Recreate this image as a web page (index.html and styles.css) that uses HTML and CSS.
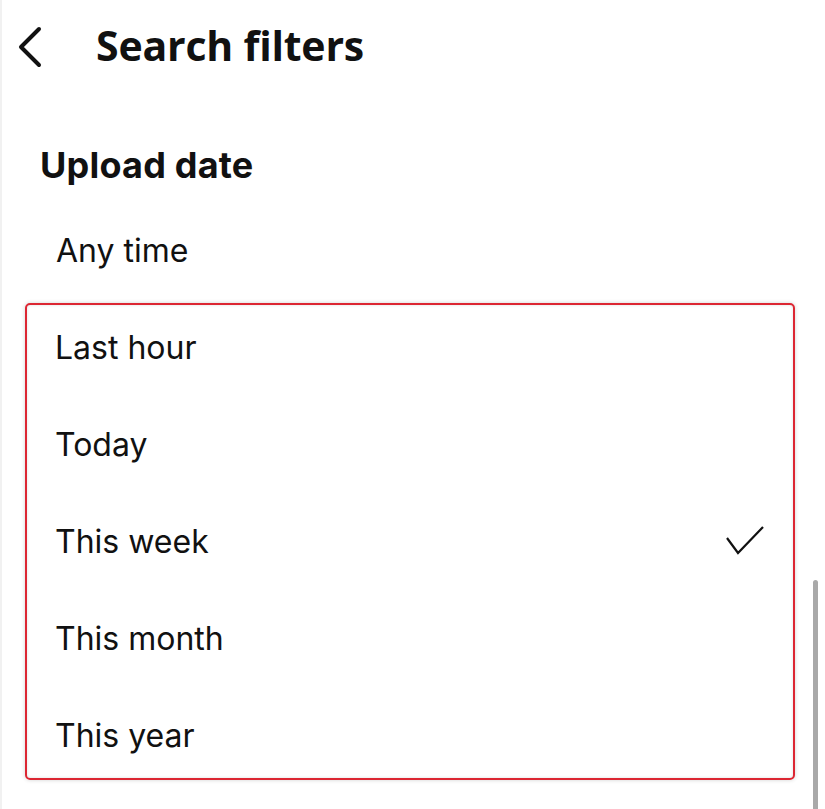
FILE: index.html
```html
<!DOCTYPE html>
<html lang="en">
<head>
<meta charset="utf-8">
<title>Search filters</title>
<link rel="stylesheet" href="styles.css">
</head>
<body>
<div class="page">
  <header class="topbar">
    <svg class="back" width="28" height="44" viewBox="0 0 28 44" aria-hidden="true">
      <path d="M23 4 L5 22 L23 40" fill="none" stroke="#111" stroke-width="4" stroke-linecap="round" stroke-linejoin="round"/>
    </svg>
    <h1 class="title">Search filters</h1>
  </header>
  <h2 class="section">Upload date</h2>
  <div class="row plain">Any time</div>
  <div class="box">
    <div class="list">
      <div class="row">Last hour</div>
      <div class="row">Today</div>
      <div class="row">This week
        <svg class="check" width="40" height="30" viewBox="0 0 40 30" aria-hidden="true">
          <path d="M2 12 L13 27 L38 1" fill="none" stroke="#111" stroke-width="2.2" stroke-linejoin="miter"/>
        </svg>
      </div>
      <div class="row">This month</div>
      <div class="row">This year</div>
    </div>
  </div>
  <div class="scrollbar"></div>
</div>
</body>
</html>
```
FILE: styles.css
```css
html, body {
  margin: 0;
  padding: 0;
  background: #fff;
}
body {
  color: #111;
  font-family: Inter, "Noto Sans", sans-serif;
  overflow: hidden;
}
.page {
  position: relative;
  width: 825px;
  height: 809px;
  border-left: 2px solid #f1f1f1;
  box-sizing: border-box;
}
.topbar {
  height: 92px;
  display: flex;
  align-items: center;
  padding-left: 14px;
}
.back {
  display: block;
  margin-top: 2px;
}
.title {
  margin: 0 0 0 52px;
  font-family: "Open Sans", sans-serif;
  font-weight: 700;
  font-size: 41px;
  line-height: 1.362;
  letter-spacing: -0.2px;
}
.section {
  margin: 0;
  padding: 53px 0 17px 38px;
  height: 40px;
  line-height: 40px;
  font-size: 36px;
  font-weight: 700;
  letter-spacing: 0.2px;
}
.row {
  height: 97px;
  display: flex;
  align-items: center;
  justify-content: space-between;
  font-size: 32px;
  font-weight: 400;
  padding-left: 28px;
  padding-right: 28px;
}
.row.plain {
  padding-left: 54px;
}
.box {
  margin: 4px 0 0 23px;
  width: 770px;
  box-sizing: border-box;
  border: 2px solid #dc2632;
  border-radius: 5px;
  box-shadow: 0 0 4px rgba(0, 0, 0, 0.18), inset 0 0 3px rgba(0, 0, 0, 0.14);
}
.list {
  margin: -6px 0;
}
.check {
  display: block;
  margin-top: -2px;
}
.scrollbar {
  position: absolute;
  left: 811px;
  top: 580px;
  width: 5px;
  height: 240px;
  border-radius: 3px;
  background: #a9a9a9;
}
```
